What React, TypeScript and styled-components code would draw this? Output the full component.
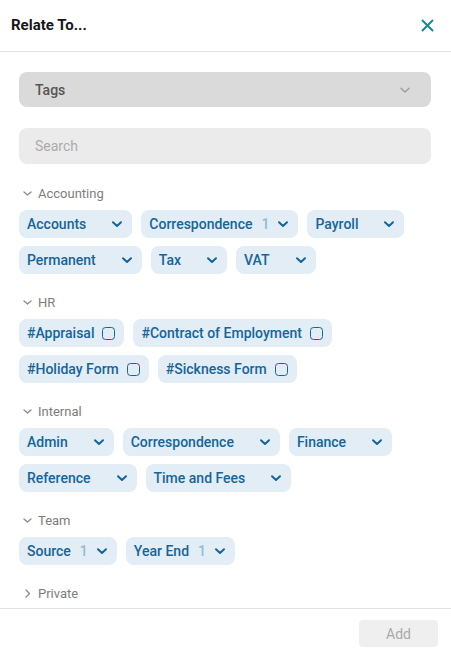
import React from "react";
import styled, { createGlobalStyle } from "styled-components";

const Global = createGlobalStyle`
  html, body { margin: 0; padding: 0; background: #fff; }
  body { font-family: Roboto, "Liberation Sans", sans-serif; }
  * { box-sizing: border-box; }
`;

const Dialog = styled.div`
  width: 451px;
  height: 657px;
  display: flex;
  flex-direction: column;
  background: #fff;
  overflow: hidden;
`;

const Header = styled.div`
  height: 52px;
  flex: none;
  display: flex;
  align-items: center;
  justify-content: space-between;
  padding: 0 17px 1px 11px;
  border-bottom: 1px solid #e2e2e2;
`;

const Title = styled.h1`
  margin: 0;
  font-size: 15px;
  font-weight: 700;
  color: #161616;
  letter-spacing: 0;
`;

const CloseButton = styled.button`
  border: 0;
  background: none;
  padding: 0;
  width: 14px;
  height: 14px;
  display: flex;
  align-items: center;
  justify-content: center;
  cursor: pointer;
`;

const Body = styled.div`
  flex: 1;
  overflow: hidden;
  padding: 20px 20px 0 19px;
`;

const Select = styled.div`
  height: 35px;
  border-radius: 8px;
  background: #dadada;
  display: flex;
  align-items: center;
  justify-content: space-between;
  padding: 0 20px 0 16px;
  font-size: 14px;
  font-weight: 500;
  color: #555;
`;

const Search = styled.input`
  display: block;
  width: 100%;
  height: 36px;
  margin-top: 21px;
  border: 0;
  border-radius: 8px;
  background: #ebebeb;
  padding: 0 16px;
  font-family: Roboto, "Liberation Sans", sans-serif;
  font-size: 14px;
  color: #333;
  outline: none;
  &::placeholder { color: #ababab; }
`;

const Section = styled.div<{ $first?: boolean }>`
  margin-top: ${(p) => (p.$first ? "20px" : "19px")};
`;

const SectionHeader = styled.div`
  height: 18px;
  display: flex;
  align-items: center;
  gap: 6px;
  padding-left: 4px;
  font-size: 13px;
  color: #7d7d7d;
`;

const ChipWrap = styled.div`
  margin-top: 8px;
  display: flex;
  flex-wrap: wrap;
  gap: 8px 9px;
`;

const Chip = styled.div`
  height: 28px;
  border-radius: 8px;
  background: #e3edf6;
  display: flex;
  align-items: center;
  padding: 0 9px 0 8px;
  font-size: 14px;
  font-weight: 500;
  color: #15659a;
  white-space: nowrap;
`;

const Count = styled.span`
  width: 22px;
  padding-left: 9px;
  color: #93bbd3;
  font-weight: 500;
`;

const ChevronBox = styled.span`
  display: flex;
  margin-left: 3px;
`;

const BoxIcon = styled.span`
  display: inline-block;
  width: 13px;
  height: 13px;
  border: 1.6px solid #15659a;
  border-radius: 3.5px;
  margin-left: 8px;
`;

const Footer = styled.div`
  flex: none;
  height: 49px;
  border-top: 1px solid #e2e2e2;
  display: flex;
  justify-content: flex-end;
  align-items: flex-start;
  padding: 11px 13px 0 0;
`;

const AddButton = styled.button`
  width: 79px;
  height: 27px;
  border: 0;
  border-radius: 4px;
  background: #efefef;
  color: #a9a9a9;
  font-family: Roboto, "Liberation Sans", sans-serif;
  font-size: 14px;
`;

const Chevron = ({ color = "#15659a", size = 12, w = 2 }: { color?: string; size?: number; w?: number }) => (
  <svg width={size} height={size} viewBox="0 0 12 12" fill="none">
    <path d="M2 4.2 L6 8 L10 4.2" stroke={color} strokeWidth={w} strokeLinecap="round" strokeLinejoin="round" />
  </svg>
);

const SmallChevron = ({ open }: { open: boolean }) => (
  <svg width="9" height="9" viewBox="0 0 9 9" fill="none">
    {open ? (
      <path d="M1 3 L4.5 6 L8 3" stroke="#8a8a8a" strokeWidth="1.3" strokeLinecap="round" strokeLinejoin="round" />
    ) : (
      <path d="M3 1 L6.5 4.5 L3 8" stroke="#8a8a8a" strokeWidth="1.3" strokeLinecap="round" strokeLinejoin="round" />
    )}
  </svg>
);

type ChipData = { label: string; count?: number; hash?: boolean };

const sections: { name: string; open: boolean; chips: ChipData[] }[] = [
  {
    name: "Accounting",
    open: true,
    chips: [
      { label: "Accounts" },
      { label: "Correspondence", count: 1 },
      { label: "Payroll" },
      { label: "Permanent" },
      { label: "Tax" },
      { label: "VAT" },
    ],
  },
  {
    name: "HR",
    open: true,
    chips: [
      { label: "#Appraisal", hash: true },
      { label: "#Contract of Employment", hash: true },
      { label: "#Holiday Form", hash: true },
      { label: "#Sickness Form", hash: true },
    ],
  },
  {
    name: "Internal",
    open: true,
    chips: [
      { label: "Admin" },
      { label: "Correspondence" },
      { label: "Finance" },
      { label: "Reference" },
      { label: "Time and Fees" },
    ],
  },
  {
    name: "Team",
    open: true,
    chips: [
      { label: "Source", count: 1 },
      { label: "Year End", count: 1 },
    ],
  },
  { name: "Private", open: false, chips: [] },
];

export default function App() {
  return (
    <>
      <Global />
      <Dialog>
        <Header>
          <Title>Relate To...</Title>
          <CloseButton aria-label="Close">
            <svg width="13" height="13" viewBox="0 0 13 13" fill="none">
              <path d="M1.5 1.5 L11.5 11.5 M11.5 1.5 L1.5 11.5" stroke="#19879a" strokeWidth="2" strokeLinecap="round" />
            </svg>
          </CloseButton>
        </Header>
        <Body>
          <Select>
            <span>Tags</span>
            <Chevron color="#9a9a9a" size={12} w={1.3} />
          </Select>
          <Search placeholder="Search" />
          {sections.map((s, i) => (
            <Section key={s.name} $first={i === 0}>
              <SectionHeader>
                <SmallChevron open={s.open} />
                <span>{s.name}</span>
              </SectionHeader>
              {s.chips.length > 0 && (
                <ChipWrap>
                  {s.chips.map((c) => (
                    <Chip key={c.label}>
                      <span>{c.label}</span>
                      {c.hash ? (
                        <BoxIcon />
                      ) : (
                        <>
                          <Count>{c.count ?? ""}</Count>
                          <ChevronBox>
                            <Chevron />
                          </ChevronBox>
                        </>
                      )}
                    </Chip>
                  ))}
                </ChipWrap>
              )}
            </Section>
          ))}
        </Body>
        <Footer>
          <AddButton>Add</AddButton>
        </Footer>
      </Dialog>
    </>
  );
}
